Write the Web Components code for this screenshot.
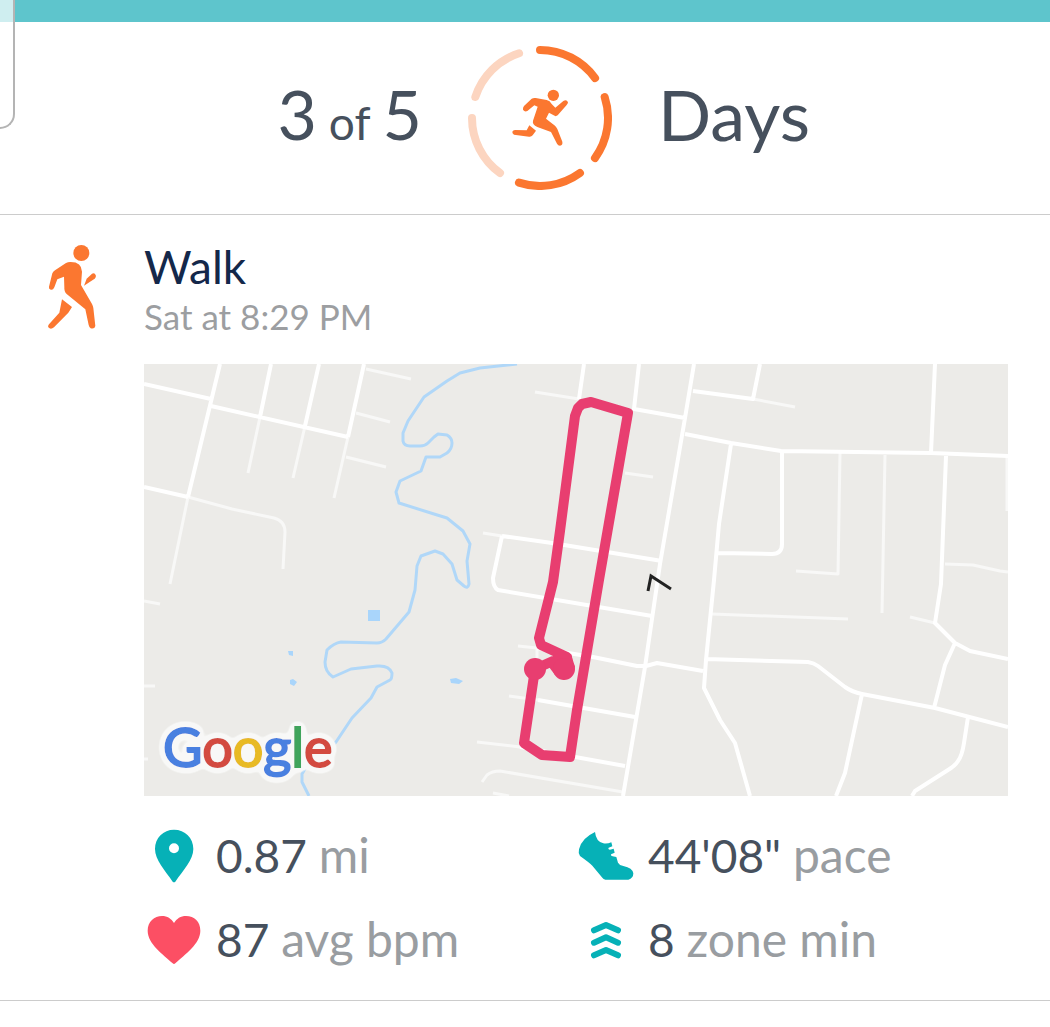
<!DOCTYPE html>
<html lang="en">
<head>
<meta charset="utf-8">
<meta name="viewport" content="width=device-width, initial-scale=1">
<title>Exercise</title>
<style>
	body {
		margin: 0;
		background: #fff;
		color: #46505d;
		font-family: Lato, "Open Sans", sans-serif;
	}
</style>
</head>
<body>
<exercise-page>
	<week-goal done="3" total="5" slot="goal">Days</week-goal>
	<activity-card>
		<walk-icon slot="icon"></walk-icon>
		<span slot="title">Walk</span>
		<span slot="time">Sat at 8:29 PM</span>
		<route-map slot="map"></route-map>
		<activity-stat icon="pin" value="0.87">mi</activity-stat>
		<activity-stat icon="shoe" value="44'08&quot;">pace</activity-stat>
		<activity-stat icon="heart" value="87">avg bpm</activity-stat>
		<activity-stat icon="zone" value="8">zone min</activity-stat>
	</activity-card>
</exercise-page>

<script>
function makeTemplate(html) {
	const template = document.createElement('template');
	template.innerHTML = html;
	return template;
}

class BaseElement extends HTMLElement {
	constructor() {
		super();
		const shadowRoot = this.attachShadow({ mode: 'open' });
		shadowRoot.appendChild(this.constructor.template.content.cloneNode(true));
	}
}

class ExercisePage extends BaseElement {
	static template = makeTemplate(/* html */`
<style>
	:host {
		display: block;
		position: relative;
	}

	.bar {
		height: 22px;
		background: #5ec5cc;
	}

	/* edge panel handle, lies over the page */
	.edge {
		position: absolute;
		top: 0;
		left: 0;
		box-sizing: border-box;
		width: 15px;
		height: 129px;
		border: 2px solid #b4b4b4;
		border-width: 0 2px 2px 0;
		border-radius: 0 0 18px 0;
		background: rgba(255, 255, 255, 0.7);
	}
</style>
<div class="bar"></div>
<slot name="goal"></slot>
<main><slot></slot></main>
<div class="edge"></div>
`);
}

class WeekGoal extends BaseElement {
	static template = makeTemplate(/* html */`
<style>
	:host {
		display: grid;
		grid-template-columns: 1fr 144px 1fr;
		align-items: center;
		gap: 46px;
		padding: 24px 0 24px 30px;
		border-bottom: 1px solid #ccc;
		font-size: 70px;
		line-height: 72px;
	}

	.count {
		display: flex;
		justify-content: flex-end;
		align-items: baseline;
		gap: 12px;
		font-size: 68px;
	}

	.label {
		padding-bottom: 8px;
	}

	small {
		font-size: 46px;
	}

	svg {
		display: block;
		width: 144px;
		height: 144px;
	}

	.ring {
		fill: none;
		stroke: #fb7730;
		stroke-width: 24;
		stroke-linecap: round;
	}

	.left {
		stroke: #fcd5c0;
	}
</style>
<div class="count"><span id="done"></span> <small>of</small> <span id="total"></span></div>
<svg viewBox="54 48 432 432" aria-hidden="true">
	<g id="ring"></g>
	<g fill="#fb7730">
		<circle cx="310" cy="196" r="17"/>
		<path d="M222 228L245 206Q250 203 257 204L290 210Q300 212 305 222L316 233L340 213Q350 207 354 217Q354 221 350 225L323 256Q317 261 311 256L297 248L288 266L315 287Q320 292 322 297L337 335Q339 345 330 347Q324 347 321 341L303 306L262 291Q246 284 249 272L263 230L253 226L232 243Q224 247 219 239Q218 233 222 228Z"/>
		<path d="M238 286L258 302L248 316Q244 321 237 320L192 314Q186 310 187 305Q189 300 195 300L230 301Z"/>
	</g>
</svg>
<div class="label"><slot></slot></div>
`);

	connectedCallback() {
		const done = Number(this.getAttribute('done'));
		const total = Number(this.getAttribute('total'));
		this.shadowRoot.getElementById('done').textContent = done;
		this.shadowRoot.getElementById('total').textContent = total;

		const step = 360 / total;
		let segments = '';
		for (let i = 0; i < total; i++) {
			segments += `<circle class="ring ${i < done ? '' : 'left'}" cx="270" cy="264" r="204" pathLength="360"
				stroke-dasharray="${step - 18} 360" transform="rotate(${i * step - 90} 270 264)"/>`;
		}
		this.shadowRoot.getElementById('ring').innerHTML = segments;
	}
}

class ActivityCard extends BaseElement {
	static template = makeTemplate(/* html */`
<style>
	:host {
		display: grid;
		grid-template-columns: 144px 1fr;
		padding: 28px 42px 19px 0;
		border-bottom: 1px solid #ccc;
	}

	.icon {
		padding: 2px 0 0 48px;
	}

	h2 {
		margin: 0;
		color: #14284a;
		font-size: 46px;
		font-weight: 400;
		line-height: 48px;
	}

	p {
		margin: 0 0 23px;
		color: #9c9ea1;
		font-size: 35px;
		line-height: 50px;
	}

	.stats {
		display: grid;
		grid-template-columns: 1fr 1fr;
		padding-top: 17px;
	}
</style>
<div class="icon"><slot name="icon"></slot></div>
<div>
	<h2><slot name="title"></slot></h2>
	<p><slot name="time"></slot></p>
	<slot name="map"></slot>
	<div class="stats"><slot></slot></div>
</div>
`);
}

class WalkIcon extends BaseElement {
	static template = makeTemplate(/* html */`
<style>
	:host {
		display: block;
	}

	svg {
		display: block;
		width: 50px;
		height: 86px;
		fill: #fb7730;
	}
</style>
<svg viewBox="84 45 150 258" aria-hidden="true">
	<circle cx="184" cy="69" r="24"/>
	<path d="M150 96Q185 95 186 125L183 165L216 222Q219 228 220 234L226 288Q224 298 212 295Q208 293 206 285L196 238L140 192Q132 185 133 172L132 140L112 148L103 172Q98 183 90 178Q86 176 87 170L97 130Q100 124 105 121L138 99Q144 96 150 96Z"/>
	<path d="M192 167L200 146L216 131Q224 127 228 137Q228 142 224 146Z"/>
	<path d="M126 208L156 231L145 248L102 292Q92 300 85 292Q83 288 87 283L118 248Z"/>
</svg>
`);
}

class RouteMap extends BaseElement {
	static template = makeTemplate(/* html */`
<style>
	:host {
		display: block;
	}

	svg {
		display: block;
		width: 100%;
		background: #ecebe8;
	}

	.road, .lane, .river, .route, .arrow {
		fill: none;
		stroke-linejoin: round;
	}

	.road {
		stroke: #fff;
		stroke-width: 4;
	}

	.lane {
		stroke: #f8f8f7;
		stroke-width: 3;
	}

	.river {
		stroke: #b0d7f8;
		stroke-width: 3;
	}

	.pond {
		fill: #a9d5fb;
	}

	.route {
		stroke: #e83e70;
		stroke-width: 10;
	}

	.stop {
		fill: #e83e70;
	}

	.arrow {
		stroke: #222;
		stroke-width: 3;
		stroke-linejoin: miter;
	}

	.logo {
		font-size: 54px;
		stroke-width: 2;
	}

	.blue {
		fill: #4a80e0;
		stroke: #4a80e0;
	}

	.red {
		fill: #d34b40;
		stroke: #d34b40;
	}

	.yellow {
		fill: #e8ba25;
		stroke: #e8ba25;
	}

	.green {
		fill: #3fa45b;
		stroke: #3fa45b;
	}
</style>
<svg viewBox="0 0 864 432" role="img" aria-label="Map of the walk">
	<defs>
		<filter id="halo" x="-10%" y="-10%" width="120%" height="120%">
			<feGaussianBlur in="SourceAlpha" stdDeviation="4" result="soft"/>
			<feComponentTransfer in="soft" result="spread">
				<feFuncA type="linear" slope="18" intercept="-1"/>
			</feComponentTransfer>
			<feFlood flood-color="#f8f8f7"/>
			<feComposite in2="spread" operator="in"/>
			<feMerge>
				<feMergeNode/>
				<feMergeNode in="SourceGraphic"/>
			</feMerge>
		</filter>
	</defs>
	<path class="river" d="M373 0L336 4L316 9L303 17L280 33L264 57L259 69V77Q260 82 266 82H276Q281 82 284 79L290 73L294 70L303 71Q308 74 308 79Q308 85 303 89L296 93H282L277 107L256 117L252 128L255 139L290 150L303 154L319 167L326 180L323 197L325 220Q324 225 320 222L313 216L308 200L299 190L291 187L277 192L273 202L271 226L265 248L242 275Q238 279 233 279L197 278Q190 279 183 286L181 298Q181 308 189 313L207 305L233 302Q245 301 248 309Q248 315 246 316L233 323L227 334L208 354L192 378L162 403L158 410V418L165 432"/>
	<path class="pond" d="M224 246h12v11h-12zM144 287h5v5l-4-1zM146 316l3-1l4 3l-3 4l-4-2zM306 315l6-1l7 3l-4 3l-8-1z"/>
	<path class="lane" d="M44 133L26 220M116 53L104 109M161 62L149 114M204 73L190 134M222 5L267 15M212 49L246 58M202 93L242 103M0 237L16 240M0 322H11M0 395H4M44 133L88 145L130 154Q141 157 141 168L139 205M391 28L435 35M481 109L509 113M339 169L358 172M374 282L393 284M393 284V296M365 332L394 336M333 378L376 383M338 418L343 411Q348 407 356 407L479 428M349 429L365 432M609 35L651 43M568 250L704 255M696 89L694 210L652 207M741 91L738 249M863 93V147M801 200L829 201L856 207L864 208M766 253L791 259"/>
	<path class="road" d="M0 20L67 35M67 42L204 73M76 0L44 133M127 0L116 53M175 0L161 62M220 0L204 73M0 123L44 133M440 0L435 35M495 0L490 45L541 54M550 0L541 54L516 200L501 303L479 432M549 27L609 35L616 0M541 70L587 79L637 87L787 89L864 92M358 172L408 179L518 197M358 172L349 214Q349 223 354 226L508 252M393 284L449 293L493 302H502L513 299L559 307M394 336L491 353M376 383L481 402M587 80L575 160L570 216L562 296L560 324L576 356L591 379L606 432M638 87V180Q638 190 628 190L574 189M562 295L664 298Q670 299 674 302L701 323Q708 328 718 330L791 344L864 363M718 330L701 409L692 432M824 353L820 379Q818 392 814 397Q811 402 804 406L771 427L768 432M791 0L787 89M802 92L797 220L791 259L811 279L826 287L864 295M811 279L801 301L790 344"/>
	<path class="arrow" d="M504 227L507 212L527 225"/>
	<path class="route" d="M391 305L380 379L398 391L426 393L433 346L455 216L484 49L447 38L438 40L434 44L431 52L416 167L409 218L395 274L397 281L423 293L424 305L409 297Z"/>
	<path class="stop" d="M391 294L403 300L411 290L427 290L431 303L420 316L411 311L405 303L391 313Z"/>
	<circle class="stop" cx="391" cy="305" r="11"/>
	<circle class="stop" cx="420" cy="305" r="11"/>
	<text class="logo" x="19" y="403" filter="url(#halo)"><tspan class="blue">G</tspan><tspan class="red">o</tspan><tspan class="yellow">o</tspan><tspan class="blue">g</tspan><tspan class="green">l</tspan><tspan class="red">e</tspan></text>
</svg>
`);
}

const statIcons = {
	pin: `<svg viewBox="12 45 180 180"><path fill="#06b1b7" fill-rule="evenodd" d="M102 59C135 59 160 83 160 117C160 150 130 180 106 215Q102 219 98 215C74 180 45 150 45 117C45 83 70 59 102 59ZM102 100A15 15 0 1 0 102 130A15 15 0 1 0 102 100Z"/></svg>`,
	heart: `<svg viewBox="12 297 180 180"><path fill="#fc4f64" d="M98 460C70 433 23 402 23 362C23 335 43 318 66 318C82 318 94 326 102 339C110 326 122 318 138 318C163 318 181 335 181 362C181 402 134 433 106 460Q102 464 98 460Z"/></svg>`,
	shoe: `<svg viewBox="48 45 180 180"><path fill="#06b1b7" d="M105 66Q108 95 130 100Q142 102 154 97L157 109L146 113Q143 118 150 119L161 116L164 128L153 133Q152 139 158 139L169 141L174 158Q178 166 190 168Q218 174 220 190Q220 205 205 209H136Q130 208 127 203L97 167Q88 158 60 138Q54 130 57 118Q64 85 105 66Z"/></svg>`,
	zone: `<svg viewBox="48 297 180 180"><path fill="none" stroke="#06b1b7" stroke-width="18" stroke-linecap="round" stroke-linejoin="round" d="M102 361L138 345L174 361M102 398L138 382L174 398M102 436L138 420L174 436"/></svg>`,
};

class ActivityStat extends BaseElement {
	static template = makeTemplate(/* html */`
<style>
	:host {
		display: flex;
		align-items: center;
		gap: 12px;
		height: 84px;
		font-size: 46px;
		line-height: 60px;
		white-space: nowrap;
	}

	#icon, svg {
		display: block;
		width: 60px;
		height: 60px;
	}

	.unit {
		color: #999da1;
		font-size: 48px;
	}
</style>
<span id="icon" aria-hidden="true"></span>
<div><span id="value"></span> <span class="unit"><slot></slot></span></div>
`);

	connectedCallback() {
		this.shadowRoot.getElementById('icon').innerHTML = statIcons[this.getAttribute('icon')];
		this.shadowRoot.getElementById('value').textContent = this.getAttribute('value');
	}
}

customElements.define('exercise-page', ExercisePage);
customElements.define('week-goal', WeekGoal);
customElements.define('activity-card', ActivityCard);
customElements.define('walk-icon', WalkIcon);
customElements.define('route-map', RouteMap);
customElements.define('activity-stat', ActivityStat);
</script>
</body>
</html>
